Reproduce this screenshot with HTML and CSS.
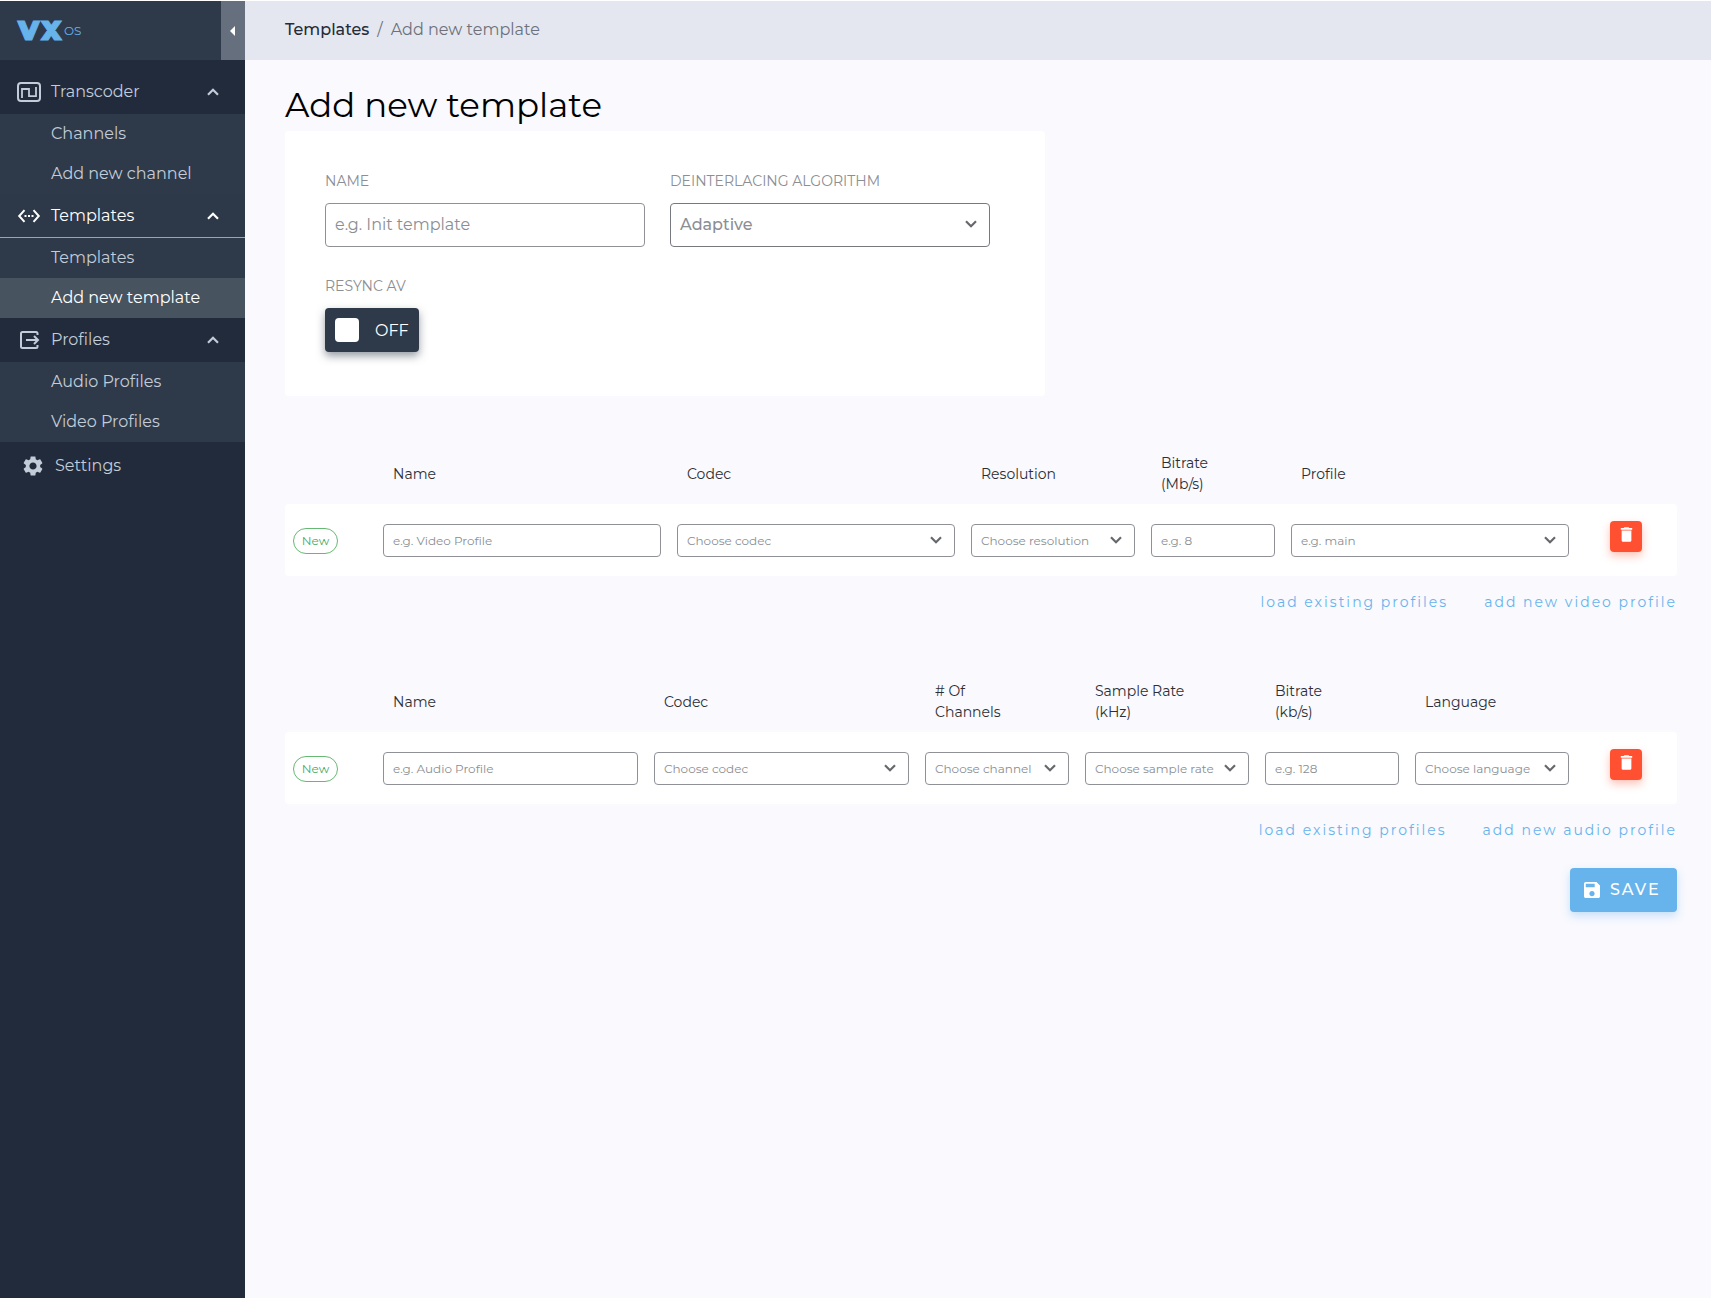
FILE: index.html
```html
<!doctype html>
<html lang="en">
  <head>
    <meta charset="utf-8">
    <title>VX OS - Add new template</title>
    <link rel="stylesheet" href="styles.css">
  </head>
  <body>
    <svg class="defs">
      <symbol id="down" viewBox="0 0 12 8"><path d="M1 1.2l5 5 5-5" fill="none" stroke="currentColor" stroke-width="2.200"/></symbol>
      <symbol id="up" viewBox="0 0 12 8"><path d="M1 6.8l5-5 5 5" fill="none" stroke="currentColor" stroke-width="2.200"/></symbol>
      <symbol id="trash" viewBox="4 2 16 20"><path d="M6 19c0 1.100.9 2 2 2h8c1.100 0 2-.9 2-2V7H6v12zM19 4h-3.500l-1-1h-5l-1 1H5v2h14V4z" fill="currentColor"/></symbol>
    </svg>

    <div class="app">
      <aside class="sidebar">
        <div class="brand">
          <div class="logo"><span class="logo-vx">VX</span><span class="logo-os">OS</span></div>
          <div class="collapse"><svg width="5" height="10" viewBox="0 0 5 10"><path d="M5 0v10L0 5z" fill="#fff"/></svg></div>
        </div>
        <nav class="menu">
          <div class="menu-head">
            <svg class="menu-icon" width="24" height="20" viewBox="0 0 24 20" fill="none" stroke="currentColor"><rect x="1" y="1" width="22" height="18" rx="3" stroke-width="2"/><path d="M5 16V7h7v7.200h7V5" stroke-width="1.800"/></svg>
            <span>Transcoder</span>
            <svg class="arrow" width="12" height="8"><use href="#up"/></svg>
          </div>
          <div class="submenu">
            <div class="menu-item">Channels</div>
            <div class="menu-item">Add new channel</div>
          </div>
          <div class="menu-head open">
            <svg class="menu-icon" width="24" height="14" viewBox="0 0 24 14" fill="none" stroke="currentColor" stroke-width="2"><path d="M7.500 1.200L2.200 7l5.300 5.800M16.500 1.200L21.800 7l-5.300 5.800"/><path d="M7.500 7h9" stroke-dasharray="2 1.500"/></svg>
            <span>Templates</span>
            <svg class="arrow" width="12" height="8"><use href="#up"/></svg>
          </div>
          <div class="submenu">
            <div class="menu-item">Templates</div>
            <div class="menu-item active">Add new template</div>
          </div>
          <div class="menu-head">
            <svg class="menu-icon" width="24" height="18" viewBox="0 0 24 18" fill="none" stroke="currentColor" stroke-width="2"><path d="M20.500 4V2.500Q20.500 1 19 1H5.500Q4 1 4 2.500v13Q4 17 5.500 17H19q1.500 0 1.500-1.500V14"/><path d="M9 9h11M17 5l4 4-4 4"/></svg>
            <span>Profiles</span>
            <svg class="arrow" width="12" height="8"><use href="#up"/></svg>
          </div>
          <div class="submenu">
            <div class="menu-item">Audio Profiles</div>
            <div class="menu-item">Video Profiles</div>
          </div>
          <div class="menu-head settings">
            <svg class="menu-icon" width="24" height="24" viewBox="0 0 24 24" fill="currentColor"><path d="M19.140 12.940c.04-.3.06-.61.06-.94 0-.32-.02-.64-.07-.94l2.030-1.580c.18-.14.23-.41.12-.61l-1.920-3.320c-.12-.22-.37-.29-.59-.22l-2.390.96c-.5-.38-1.030-.7-1.620-.94l-.36-2.540c-.04-.24-.24-.41-.48-.41h-3.840c-.24 0-.43.17-.47.41l-.36 2.540c-.59.24-1.130.57-1.620.94l-2.390-.96c-.22-.08-.47 0-.59.22L2.740 8.870c-.12.21-.08.47.12.61l2.030 1.580c-.05.3-.09.63-.09.94s.02.64.07.94l-2.030 1.580c-.18.14-.23.41-.12.61l1.920 3.320c.12.22.37.29.59.22l2.390-.96c.5.38 1.030.7 1.620.94l.36 2.540c.05.24.24.41.48.41h3.840c.24 0 .44-.17.47-.41l.36-2.540c.59-.24 1.130-.56 1.620-.94l2.390.96c.22.08.47 0 .59-.22l1.920-3.320c.12-.22.07-.47-.12-.61l-2.010-1.580zM12 15.600c-1.980 0-3.600-1.620-3.600-3.600s1.620-3.600 3.600-3.600 3.600 1.620 3.600 3.600-1.620 3.600-3.600 3.600z"/></svg>
            <span>Settings</span>
          </div>
        </nav>
      </aside>

      <main class="main">
        <header class="breadcrumb"><b>Templates</b><i>/</i><span>Add new template</span></header>
        <div class="content">
          <h1>Add new template</h1>

          <section class="card">
            <div class="field">
              <label>NAME</label>
              <div class="input">e.g. Init template</div>
            </div>
            <div class="field">
              <label>DEINTERLACING ALGORITHM</label>
              <div class="input select chosen"><span>Adaptive</span><svg width="12" height="8"><use href="#down"/></svg></div>
            </div>
            <div class="field">
              <label>RESYNC AV</label>
              <div class="toggle"><span class="knob"></span>OFF</div>
            </div>
          </section>

          <section class="profiles video">
            <div class="row head">
              <div></div>
              <div>Name</div>
              <div>Codec</div>
              <div>Resolution</div>
              <div>Bitrate<br>(Mb/s)</div>
              <div>Profile</div>
            </div>
            <div class="row body">
              <div class="tag">New</div>
              <div class="input small">e.g. Video Profile</div>
              <div class="input small select"><span>Choose codec</span><svg width="12" height="8"><use href="#down"/></svg></div>
              <div class="input small select"><span>Choose resolution</span><svg width="12" height="8"><use href="#down"/></svg></div>
              <div class="input small">e.g. 8</div>
              <div class="input small select"><span>e.g. main</span><svg width="12" height="8"><use href="#down"/></svg></div>
              <div class="delete"><svg width="13" height="17"><use href="#trash"/></svg></div>
            </div>
            <div class="links"><a>load existing profiles</a><a>add new video profile</a></div>
          </section>

          <section class="profiles audio">
            <div class="row head">
              <div></div>
              <div>Name</div>
              <div>Codec</div>
              <div># Of<br>Channels</div>
              <div>Sample Rate<br>(kHz)</div>
              <div>Bitrate<br>(kb/s)</div>
              <div>Language</div>
            </div>
            <div class="row body">
              <div class="tag">New</div>
              <div class="input small">e.g. Audio Profile</div>
              <div class="input small select"><span>Choose codec</span><svg width="12" height="8"><use href="#down"/></svg></div>
              <div class="input small select"><span>Choose channel</span><svg width="12" height="8"><use href="#down"/></svg></div>
              <div class="input small select"><span>Choose sample rate</span><svg width="12" height="8"><use href="#down"/></svg></div>
              <div class="input small">e.g. 128</div>
              <div class="input small select"><span>Choose language</span><svg width="12" height="8"><use href="#down"/></svg></div>
              <div class="delete"><svg width="13" height="17"><use href="#trash"/></svg></div>
            </div>
            <div class="links"><a>load existing profiles</a><a>add new audio profile</a></div>
          </section>

          <div class="actions">
            <div class="save"><svg width="16" height="16" viewBox="3 3 18 18"><path d="M17 3H5c-1.110 0-2 .9-2 2v14c0 1.100.89 2 2 2h14c1.100 0 2-.9 2-2V7l-4-4zm-5 16c-1.660 0-3-1.340-3-3s1.340-3 3-3 3 1.340 3 3-1.340 3-3 3zm3-10H5V5h10v4z" fill="#fff"/></svg><span>SAVE</span></div>
          </div>
        </div>
      </main>
    </div>
  </body>
</html>
```

FILE: styles.css
```css
* {
  box-sizing: border-box;
}

body {
  margin: 0;
  font-family: Montserrat, Inter, "Open Sans", sans-serif;
  font-size: 16px;
  font-weight: 400;
  background: #f9f9fe;
}

.defs {
  display: none;
}

.app {
  display: flex;
  height: 1298px;
  border-top: 1px solid #fff;
}

/* sidebar */
.sidebar {
  width: 245px;
  background: #212b3c;
  color: #c3ccd9;
}

.brand {
  display: flex;
  justify-content: space-between;
  height: 59px;
  background: #2e3a4a;
}

.logo {
  display: flex;
  align-items: center;
  padding: 0 0 1px 18px;
  color: #67b3ec;
}

.logo-vx {
  font-size: 27px;
  font-weight: 900;
  letter-spacing: 2.5px;
  -webkit-text-stroke: 1px #67b3ec;
}

.logo-os {
  font-size: 12px;
}

.collapse {
  display: flex;
  align-items: center;
  justify-content: center;
  width: 24px;
  padding-right: 1px;
  background: #656f7d;
}

.menu {
  padding-top: 10px;
}

.menu-head {
  display: flex;
  align-items: center;
  height: 44px;
  padding: 0 26px 0 17px;
}

.menu-head span {
  padding-bottom: 2px;
}

.menu-head.open {
  background: #2d3948;
  border-bottom: 1px solid #67b3ec;
  color: #fff;
}

.menu-head.open span {
  padding-bottom: 0;
}

.menu-icon {
  margin-right: 10px;
}

.arrow {
  margin-left: auto;
}

.menu-head.settings {
  height: 48px;
  padding-left: 21px;
}

.submenu {
  background: #2e3a4a;
}

.menu-item {
  height: 40px;
  padding-left: 51px;
  line-height: 39px;
}

.menu-item.active {
  background: #47535f;
  color: #fff;
}

/* page */
.main {
  flex: 1;
}

.breadcrumb {
  display: flex;
  align-items: center;
  height: 59px;
  padding: 0 0 2px 40px;
  background: #e4e7ef;
  color: #6c717b;
}

.breadcrumb b {
  color: #252b38;
  font-weight: 500;
}

.breadcrumb i {
  margin: 0 8px;
  font-style: normal;
}

.content {
  padding: 20px 34px 0 40px;
}

h1 {
  margin: 0;
  height: 51px;
  font-size: 34px;
  font-weight: 400;
  line-height: 50px;
  color: #000;
}

.card {
  display: grid;
  grid-template-columns: 320px 320px;
  column-gap: 25px;
  row-gap: 29px;
  align-content: start;
  width: 760px;
  height: 265px;
  padding: 40px;
  border-radius: 4px;
  background: #fff;
}

.field label {
  display: block;
  height: 32px;
  font-size: 14px;
  line-height: 20px;
  color: #8b8e93;
}

.input {
  display: flex;
  align-items: center;
  height: 44px;
  padding: 0 12px 2px 9px;
  border: 1px solid #8f9196;
  border-radius: 4px;
  background: #fff;
  color: #8b8e93;
  white-space: nowrap;
}

.select {
  justify-content: space-between;
}

.select svg {
  color: #66686c;
}

.chosen {
  font-weight: 500;
  border-color: #77797e;
}

.toggle {
  display: flex;
  align-items: center;
  width: 94px;
  height: 44px;
  padding-left: 10px;
  border-radius: 4px;
  background: #2e3a4a;
  box-shadow: 0 4px 8px rgba(46, 58, 74, 0.5);
  color: #fff;
}

.knob {
  width: 24px;
  height: 24px;
  margin-right: 16px;
  border-radius: 4px;
  background: #fff;
}

/* profile tables */
.profiles {
  margin-top: 48px;
}

.row {
  display: grid;
  column-gap: 16px;
  align-items: center;
}

.video .row {
  grid-template-columns: 82px 278px 278px 164px 124px 278px 1fr;
}

.audio .row {
  grid-template-columns: 82px 255px 255px 144px 164px 134px 154px 1fr;
}

.head {
  height: 60px;
  font-size: 14px;
  line-height: 21px;
  color: #2c2e34;
}

.head div {
  padding-left: 10px;
}

.body {
  height: 72px;
  border-radius: 4px;
  background: #fff;
}

.input.small {
  height: 33px;
  padding-bottom: 0;
  font-size: 12px;
}

.tag {
  width: 45px;
  height: 26px;
  margin: 2px 0 0 8px;
  border: 1px solid #67b873;
  border-radius: 13px;
  color: #4fa95c;
  font-size: 12px;
  line-height: 24px;
  text-align: center;
}

.delete {
  display: flex;
  justify-content: center;
  width: 32px;
  height: 31px;
  margin: -7px 0 0 25px;
  padding-top: 5px;
  border-radius: 4px;
  background: #ff5132;
  box-shadow: 0 4px 8px rgba(255, 81, 50, 0.35);
  color: #fff;
}

.links {
  display: flex;
  justify-content: flex-end;
  gap: 36px;
  height: 48px;
  font-size: 14px;
  line-height: 52px;
  letter-spacing: 2px;
  color: #67b3ec;
}

.actions {
  display: flex;
  justify-content: flex-end;
  margin-top: 16px;
}

.save {
  display: flex;
  align-items: center;
  width: 107px;
  height: 44px;
  padding-left: 14px;
  border-radius: 4px;
  background: #67b3ec;
  box-shadow: 0 4px 8px rgba(103, 179, 236, 0.35);
  color: #fff;
  font-weight: 500;
  letter-spacing: 1.9px;
}

.save svg {
  margin-right: 10px;
}

.save span {
  padding-bottom: 2px;
}
```
